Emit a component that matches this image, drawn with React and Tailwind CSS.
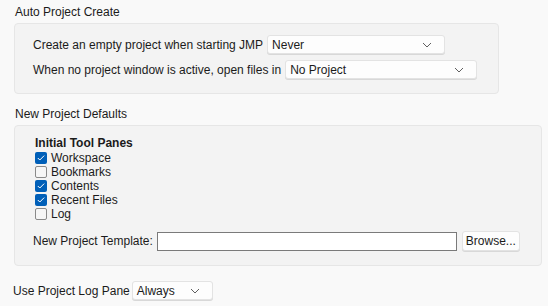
import React from "react";

const Chevron = () => (
  <svg width="10" height="6" viewBox="0 0 10 6" className="shrink-0">
    <path d="M1 1l4 4 4-4" fill="none" stroke="#5f5f5f" strokeWidth="1" />
  </svg>
);

const Select = ({ value, w }) => (
  <div className={`flex h-[19px] items-center justify-between rounded-[3px] border border-[#e3e3e3] bg-[#fdfdfd] pl-[4px] pr-[12px] shadow-[0_1px_0_#d8d8d8] ${w}`}>
    <span>{value}</span>
    <Chevron />
  </div>
);

const Check = ({ checked, label }) => (
  <div className="flex h-[14px] items-center gap-[4px]">
    {checked ? (
      <div className="flex h-[12px] w-[12px] items-center justify-center rounded-[2px] bg-[#005fb8]">
        <svg width="8" height="6" viewBox="0 0 8 6">
          <path d="M0.8 3l2 2 4.4-4.4" fill="none" stroke="white" strokeWidth="1" />
        </svg>
      </div>
    ) : (
      <div className="h-[12px] w-[12px] rounded-[2px] border border-[#8a8a8a] bg-[#f6f6f6]" />
    )}
    <span>{label}</span>
  </div>
);

export default function App() {
  return (
    <div
      className="h-[306px] w-[548px] bg-[#f9f9f9] text-[12px] leading-[14px] text-[#1b1b1b]"
      style={{ fontFamily: '"Liberation Sans", Arial, sans-serif' }}
    >
      <div className="px-[14px] pt-[5px]">
        <div className="pl-[1px]">Auto Project Create</div>
        <div className="mt-[4px] flex w-[485px] flex-col gap-[6px] rounded-[4px] border border-[#e6e6e6] bg-[#f3f3f3] pb-[14px] pl-[18px] pt-[11px]">
          <div className="flex items-center gap-[4px]">
            <span>Create an empty project when starting JMP</span>
            <Select value="Never" w="w-[178px]" />
          </div>
          <div className="flex items-center gap-[4px]">
            <span>When no project window is active, open files in</span>
            <Select value="No Project" w="w-[192px]" />
          </div>
        </div>

        <div className="mt-[13px] pl-[1px]">New Project Defaults</div>
        <div className="mt-[4px] w-[528px] rounded-[4px] border border-[#e6e6e6] bg-[#f3f3f3] pb-[14px] pl-[20px] pt-[10px]">
          <div className="font-bold">Initial Tool Panes</div>
          <div className="mt-[1px] flex flex-col">
            <Check checked label="Workspace" />
            <Check label="Bookmarks" />
            <Check checked label="Contents" />
            <Check checked label="Recent Files" />
            <Check label="Log" />
          </div>
          <div className="mt-[10px] flex items-center">
            <span className="-ml-[2px]">New Project Template:</span>
            <div className="ml-[4px] h-[19px] w-[300px] border border-[#7a7a7a] bg-white" />
            <div className="ml-[5px] flex h-[20px] w-[58px] items-center justify-center rounded-[3px] border border-[#e3e3e3] bg-[#fdfdfd] shadow-[0_1px_0_#d8d8d8]">
              Browse...
            </div>
          </div>
        </div>

        <div className="mt-[15px] flex items-center gap-[2px] -ml-[1px]">
          <span>Use Project Log Pane</span>
          <Select value="Always" w="w-[81px]" />
        </div>
      </div>
    </div>
  );
}
